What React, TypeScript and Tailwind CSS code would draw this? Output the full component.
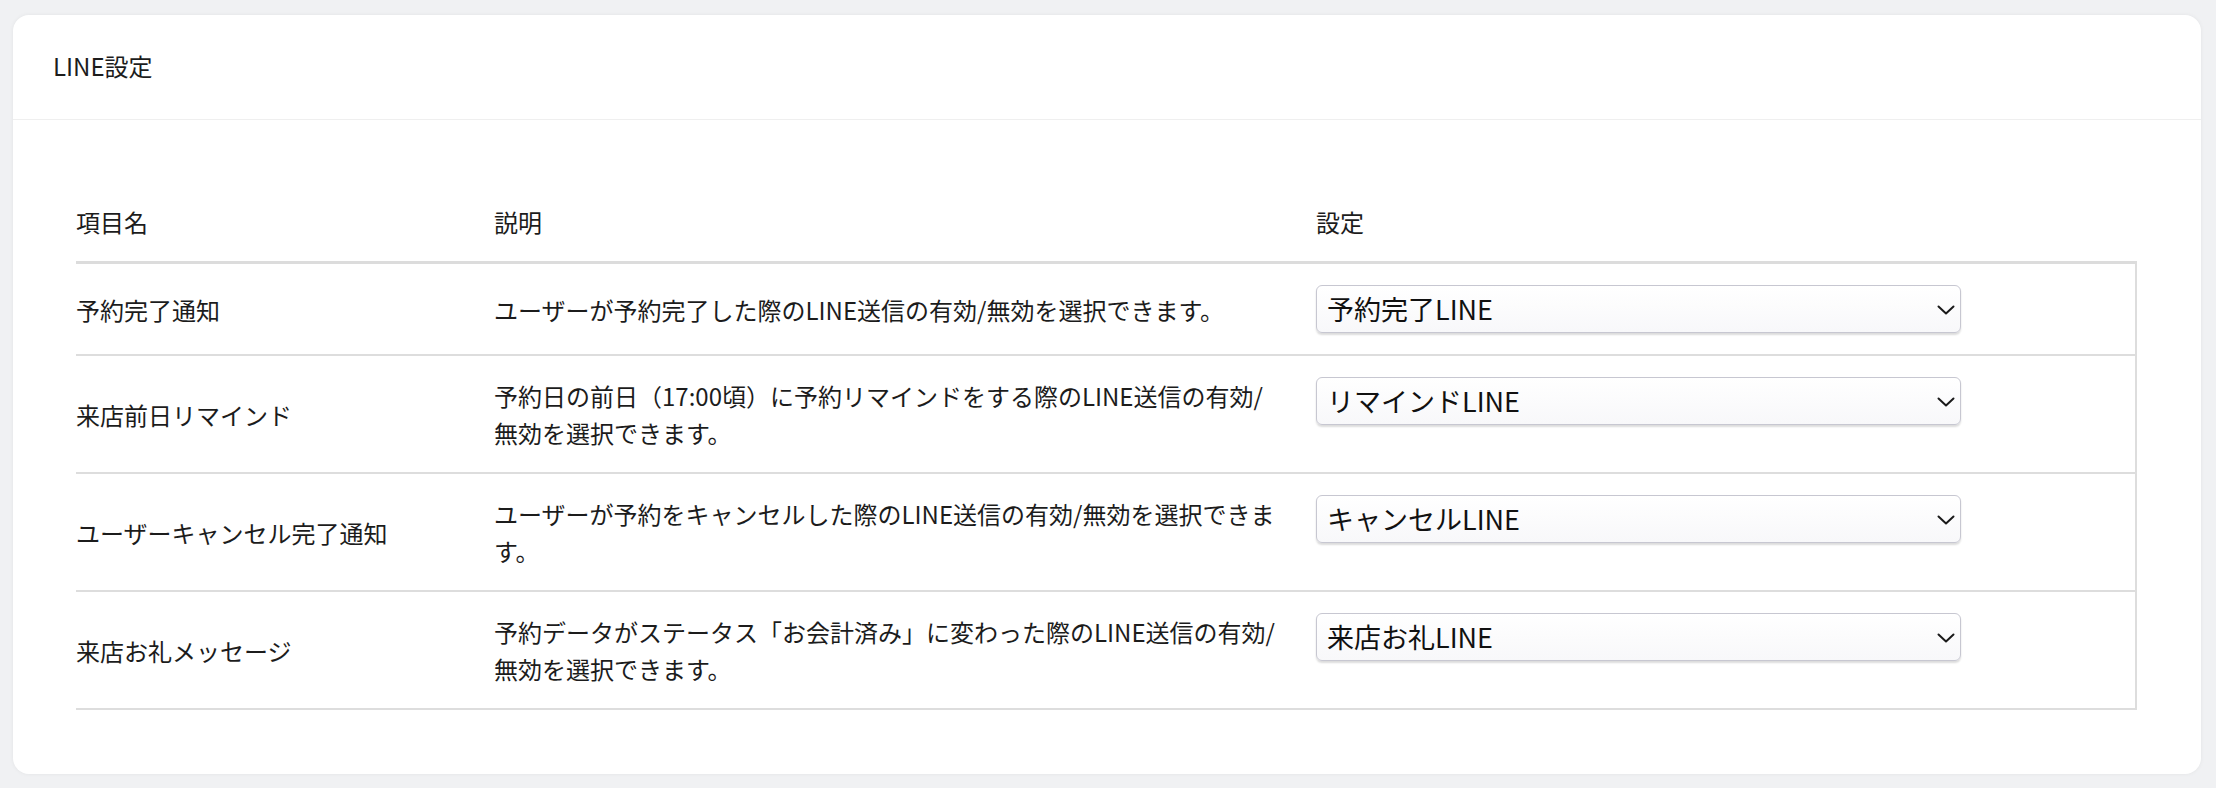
import React from "react";

const rows = [
  {
    name: "予約完了通知",
    desc: ["ユーザーが予約完了した際のLINE送信の有効/無効を選択できます。"],
    value: "予約完了LINE",
  },
  {
    name: "来店前日リマインド",
    desc: ["予約日の前日（17:00頃）に予約リマインドをする際のLINE送信の有効/", "無効を選択できます。"],
    value: "リマインドLINE",
  },
  {
    name: "ユーザーキャンセル完了通知",
    desc: ["ユーザーが予約をキャンセルした際のLINE送信の有効/無効を選択できま", "す。"],
    value: "キャンセルLINE",
  },
  {
    name: "来店お礼メッセージ",
    desc: ["予約データがステータス「お会計済み」に変わった際のLINE送信の有効/", "無効を選択できます。"],
    value: "来店お礼LINE",
  },
];

function Select({ value }: { value: string }) {
  return (
    <div className="relative w-[645px] h-[48px]">
      <select
        defaultValue={value}
        className="appearance-none w-full h-full rounded-[6px] border border-[#c7c7d1] bg-gradient-to-b from-white to-[#f8f8fa] pl-[10px] pr-[40px] text-[27px] leading-[46px] text-[#111] shadow-[0_2px_2px_rgba(0,0,0,0.14)] outline-none"
        style={{ fontFamily: '"Noto Sans CJK JP", "Noto Sans", sans-serif' }}
      >
        <option value={value}>{value}</option>
        <option value="無効">無効</option>
      </select>
      <svg
        className="pointer-events-none absolute right-[6px] top-[20px]"
        width="18"
        height="10"
        viewBox="0 0 18 10"
        fill="none"
      >
        <polyline points="1.5,1.5 9,8.5 16.5,1.5" stroke="#1a1a1a" strokeWidth="2" strokeLinecap="round" strokeLinejoin="round" />
      </svg>
    </div>
  );
}

export default function App() {
  return (
    <div
      className="min-h-[788px] w-[2216px] bg-[#f0f1f3] pt-[15px] pl-[13px] pr-[15px] pb-[15px] text-[#1c1c1c]"
      style={{ fontFamily: '"Noto Sans CJK JP", "Noto Sans", sans-serif' }}
    >
      <div className="rounded-[16px] bg-white shadow-[0_0_4px_rgba(0,0,0,0.06)]">
        <div className="h-[105px] flex items-center px-[40px] border-b border-[#efefef] text-[24px] leading-[36px] pb-[2px]">
          LINE設定
        </div>
        <div className="pt-[62px] pb-[64px] pl-[63px] pr-[64px]">
          <div className="grid grid-cols-[418px_822px_1fr] items-center border-b-[3px] border-[#dcdcdc] py-[21px] text-[24px] leading-[37px]">
            <div>項目名</div>
            <div>説明</div>
            <div>設定</div>
          </div>
          <div className="border-r-2 border-[#dddddd]">
            {rows.map((r) => (
              <div
                key={r.name}
                className="grid grid-cols-[418px_822px_1fr] items-center border-b-2 border-[#dddddd] py-[21px] text-[24px] leading-[37px]"
              >
                <div className="whitespace-nowrap">{r.name}</div>
                <div className="whitespace-nowrap">
                  {r.desc.map((l, i) => (
                    <div key={i}>{l}</div>
                  ))}
                </div>
                <div className="self-start">
                  <Select value={r.value} />
                </div>
              </div>
            ))}
          </div>
        </div>
      </div>
    </div>
  );
}
